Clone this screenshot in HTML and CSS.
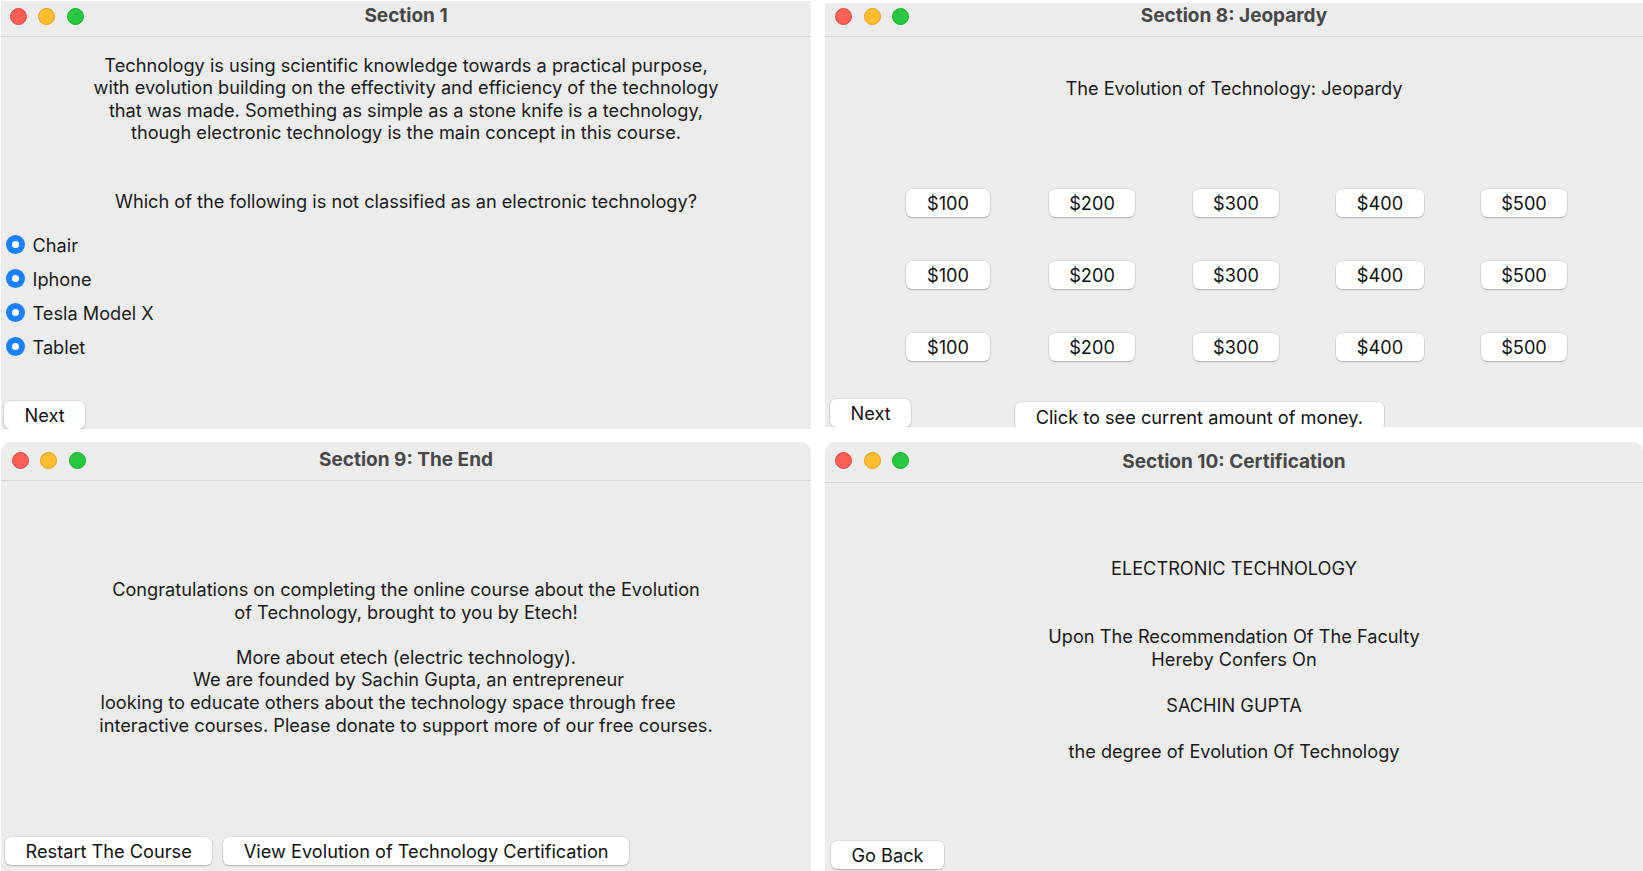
FILE: index.html
```html
<!DOCTYPE html>
<html>
<head>
<meta charset="utf-8">
<title>Evolution of Technology</title>
<link rel="stylesheet" href="styles.css">
</head>
<body>
<div class="desk">
  <section class="win w1">
    <header class="titlebar">
      <div class="lights"><span class="light red"></span><span class="light yellow"></span><span class="light green"></span></div>
      <h1 class="title">Section 1</h1>
    </header>
    <div class="content">
      <p class="text para">Technology is using scientific knowledge towards a practical purpose,
with evolution building on the effectivity and efficiency of the technology
that was made. Something as simple as a stone knife is a technology,
though electronic technology is the main concept in this course.</p>
      <p class="text question">Which of the following is not classified as an electronic technology?</p>
      <ul class="radios">
        <li class="radio-row"><span class="radio"></span>Chair</li>
        <li class="radio-row"><span class="radio"></span>Iphone</li>
        <li class="radio-row"><span class="radio"></span>Tesla Model X</li>
        <li class="radio-row"><span class="radio"></span>Tablet</li>
      </ul>
      <div class="btnrow bottom"><button class="btn">Next</button></div>
    </div>
  </section>

  <section class="win w2">
    <header class="titlebar">
      <div class="lights"><span class="light red"></span><span class="light yellow"></span><span class="light green"></span></div>
      <h1 class="title">Section 8: Jeopardy</h1>
    </header>
    <div class="content">
      <p class="text heading">The Evolution of Technology: Jeopardy</p>
      <div class="board">
        <div class="cell"><button class="btn">$100</button></div>
        <div class="cell"><button class="btn">$200</button></div>
        <div class="cell"><button class="btn">$300</button></div>
        <div class="cell"><button class="btn">$400</button></div>
        <div class="cell"><button class="btn">$500</button></div>
        <div class="cell"><button class="btn">$100</button></div>
        <div class="cell"><button class="btn">$200</button></div>
        <div class="cell"><button class="btn">$300</button></div>
        <div class="cell"><button class="btn">$400</button></div>
        <div class="cell"><button class="btn">$500</button></div>
        <div class="cell"><button class="btn">$100</button></div>
        <div class="cell"><button class="btn">$200</button></div>
        <div class="cell"><button class="btn">$300</button></div>
        <div class="cell"><button class="btn">$400</button></div>
        <div class="cell"><button class="btn">$500</button></div>
      </div>
      <div class="btnrow bottom jrow">
        <button class="btn">Next</button>
        <button class="btn money">Click to see current amount of money.</button>
      </div>
    </div>
  </section>

  <section class="win w3">
    <header class="titlebar">
      <div class="lights"><span class="light red"></span><span class="light yellow"></span><span class="light green"></span></div>
      <h1 class="title">Section 9: The End</h1>
    </header>
    <div class="content">
      <p class="text end">Congratulations on completing the online course about the Evolution
of Technology, brought to you by Etech!

More about etech (electric technology).
 We are founded by Sachin Gupta, an entrepreneur
looking to educate others about the technology space through free       
interactive courses. Please donate to support more of our free courses.</p>
      <div class="btnrow endrow">
        <button class="btn">Restart The Course</button>
        <button class="btn">View Evolution of Technology Certification</button>
      </div>
    </div>
  </section>

  <section class="win w4">
    <header class="titlebar">
      <div class="lights"><span class="light red"></span><span class="light yellow"></span><span class="light green"></span></div>
      <h1 class="title">Section 10: Certification</h1>
    </header>
    <div class="content">
      <p class="text cert">ELECTRONIC TECHNOLOGY


Upon The Recommendation Of The Faculty
Hereby Confers On

SACHIN GUPTA

the degree of Evolution Of Technology</p>
      <div class="btnrow certrow"><button class="btn">Go Back</button></div>
    </div>
  </section>
</div>
</body>
</html>
```

FILE: styles.css
```css
html, body {
  margin: 0;
  height: 100%;
}

body {
  background: #ffffff;
  overflow: hidden;
  font-family: Inter, "Liberation Sans", sans-serif;
  color: #1a1a1a;
}

.desk {
  display: grid;
  grid-template-columns: 810px 818px;
  grid-template-rows: 428px 440px;
  column-gap: 14px;
  row-gap: 13px;
  padding: 1px 0 0 1px;
}

.win {
  background: #ececec;
  display: flex;
  flex-direction: column;
  overflow: hidden;
  min-height: 0;
}

.w2 {
  margin-top: 2px;
  height: 424px;
  align-self: start;
}

.w3, .w4 {
  border-radius: 10px 10px 0 0;
}

.titlebar {
  display: grid;
  grid-template-columns: 1fr auto 1fr;
  align-items: center;
  border-bottom: 1px solid #d3d3d3;
  flex: none;
  box-sizing: border-box;
}

.w1 .titlebar { height: 36px; padding-bottom: 4px; }
.w2 .titlebar { height: 34px; padding-bottom: 6px; }
.w3 .titlebar { height: 39px; padding-bottom: 2px; }
.w4 .titlebar { height: 41px; padding-bottom: 3px; }

.lights {
  display: flex;
  gap: 11.5px;
  padding-left: 8.5px;
}

.w2 .lights, .w4 .lights { padding-left: 10px; }
.w3 .lights { padding-left: 10.5px; }

.light {
  width: 17px;
  height: 17px;
  border-radius: 50%;
  box-sizing: border-box;
}

.red { background: #fe5f57; border: 0.5px solid #e2463f; }
.yellow { background: #febc2e; border: 0.5px solid #e1a116; }
.green { background: #28c840; border: 0.5px solid #14ae29; }

.title {
  margin: 0 0 3px 0;
  font-size: 19px;
  font-weight: 700;
  color: #474747;
  white-space: nowrap;
}

.w3 .title { margin-bottom: 1px; }
.w4 .title { margin-bottom: 0; margin-top: 1px; }

.content {
  flex: 1;
  display: flex;
  flex-direction: column;
  min-height: 0;
}

.text {
  margin: 0;
  font-size: 18.2px;
  line-height: 22.6px;
  text-align: center;
  white-space: pre;
}

.para { margin-top: 17px; line-height: 22.3px; }
.question { margin-top: 47px; }

.radios {
  list-style: none;
  margin: 15px 0 0 0;
  padding: 0 0 0 4.5px;
}

.radio-row {
  display: flex;
  align-items: center;
  gap: 8px;
  height: 34px;
  font-size: 18.2px;
}

.radio {
  width: 19px;
  height: 19px;
  border-radius: 50%;
  background: #1a80ff;
  display: flex;
  align-items: center;
  justify-content: center;
}

.radio::after {
  content: "";
  display: block;
  width: 7px;
  height: 7px;
  border-radius: 50%;
  background: #ffffff;
}

.btnrow {
  display: flex;
  align-items: flex-start;
  flex: none;
}

.bottom {
  margin-top: auto;
  padding-left: 3px;
  height: 28px;
}

.btn {
  font-family: inherit;
  font-size: 18.2px;
  color: #111;
  background: #ffffff;
  border: none;
  border-radius: 6px;
  height: 28px;
  padding: 0 20.5px;
  box-shadow: 0 0 0 0.5px rgba(0, 0, 0, 0.12), 0 1px 1.5px rgba(0, 0, 0, 0.22);
  white-space: nowrap;
  flex: none;
}

.heading { margin-top: 39.75px; }

.board {
  display: grid;
  grid-template-columns: repeat(5, 144px);
  grid-auto-rows: 28px;
  row-gap: 44px;
  justify-content: center;
  margin-top: 90px;
  padding-left: 4px;
}

.cell {
  display: flex;
  justify-content: center;
}

.jrow {
  padding-left: 5px;
  gap: 104px;
}

.money {
  margin-top: 3px;
  padding-top: 2px;
}

.end { margin-top: 97px; }

.endrow {
  margin-top: 100.5px;
  padding-left: 4px;
  gap: 11px;
}

.cert { margin-top: 73.75px; line-height: 22.85px; }

.certrow {
  margin-top: 79px;
  padding-left: 6px;
}
```
